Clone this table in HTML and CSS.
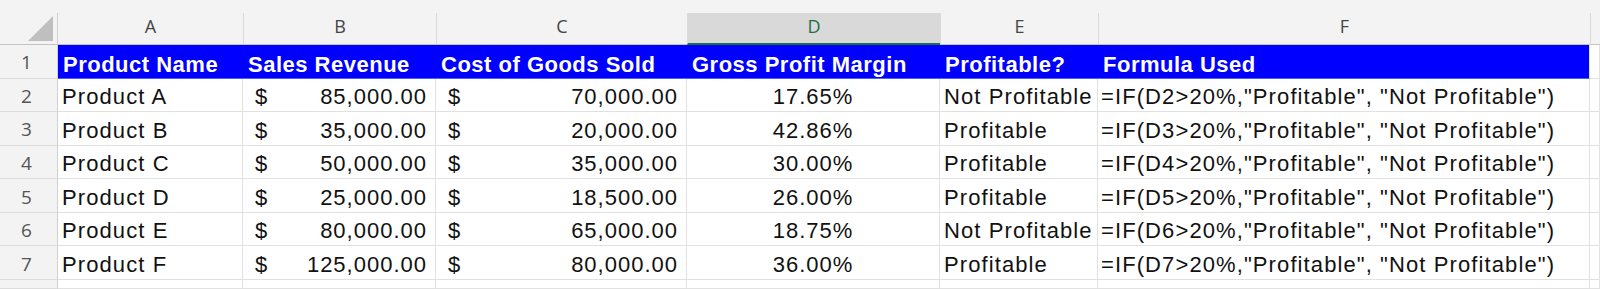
FILE: index.html
```html
<!DOCTYPE html>
<html>
<head>
<meta charset="utf-8">
<link rel="stylesheet" href="styles.css">
</head>
<body>
<div class="sheet">
  <div class="topband"></div>

  <div class="corner"><svg class="tri" width="57" height="31" viewBox="0 0 57 31"><polygon points="53,3 53,28 28,28" fill="#bfbfbf"/></svg></div>
  <div class="colhead first">A</div>
  <div class="colhead">B</div>
  <div class="colhead">C</div>
  <div class="colhead sel">D</div>
  <div class="colhead">E</div>
  <div class="colhead">F</div>
  <div class="colhead"></div>

  <div class="rowhead">1</div>
  <div class="cell hdr">Product Name</div>
  <div class="cell hdr">Sales Revenue</div>
  <div class="cell hdr">Cost of Goods Sold</div>
  <div class="cell hdr">Gross Profit Margin</div>
  <div class="cell hdr">Profitable?</div>
  <div class="cell hdr end">Formula Used</div>
  <div class="cell"></div>

  <div class="rowhead">2</div>
  <div class="cell">Product A</div>
  <div class="cell acc"><span>$</span><span>85,000.00</span></div>
  <div class="cell acc"><span>$</span><span>70,000.00</span></div>
  <div class="cell ctr">17.65%</div>
  <div class="cell">Not Profitable</div>
  <div class="cell fx">=IF(D2&gt;20%,"Profitable", "Not Profitable")</div>
  <div class="cell"></div>

  <div class="rowhead">3</div>
  <div class="cell">Product B</div>
  <div class="cell acc"><span>$</span><span>35,000.00</span></div>
  <div class="cell acc"><span>$</span><span>20,000.00</span></div>
  <div class="cell ctr">42.86%</div>
  <div class="cell">Profitable</div>
  <div class="cell fx">=IF(D3&gt;20%,"Profitable", "Not Profitable")</div>
  <div class="cell"></div>

  <div class="rowhead">4</div>
  <div class="cell">Product C</div>
  <div class="cell acc"><span>$</span><span>50,000.00</span></div>
  <div class="cell acc"><span>$</span><span>35,000.00</span></div>
  <div class="cell ctr">30.00%</div>
  <div class="cell">Profitable</div>
  <div class="cell fx">=IF(D4&gt;20%,"Profitable", "Not Profitable")</div>
  <div class="cell"></div>

  <div class="rowhead">5</div>
  <div class="cell">Product D</div>
  <div class="cell acc"><span>$</span><span>25,000.00</span></div>
  <div class="cell acc"><span>$</span><span>18,500.00</span></div>
  <div class="cell ctr">26.00%</div>
  <div class="cell">Profitable</div>
  <div class="cell fx">=IF(D5&gt;20%,"Profitable", "Not Profitable")</div>
  <div class="cell"></div>

  <div class="rowhead">6</div>
  <div class="cell">Product E</div>
  <div class="cell acc"><span>$</span><span>80,000.00</span></div>
  <div class="cell acc"><span>$</span><span>65,000.00</span></div>
  <div class="cell ctr">18.75%</div>
  <div class="cell">Not Profitable</div>
  <div class="cell fx">=IF(D6&gt;20%,"Profitable", "Not Profitable")</div>
  <div class="cell"></div>

  <div class="rowhead">7</div>
  <div class="cell">Product F</div>
  <div class="cell acc"><span>$</span><span>125,000.00</span></div>
  <div class="cell acc"><span>$</span><span>80,000.00</span></div>
  <div class="cell ctr">36.00%</div>
  <div class="cell">Profitable</div>
  <div class="cell fx">=IF(D7&gt;20%,"Profitable", "Not Profitable")</div>
  <div class="cell"></div>

  <div class="rowhead"></div>
  <div class="cell"></div>
  <div class="cell"></div>
  <div class="cell"></div>
  <div class="cell"></div>
  <div class="cell"></div>
  <div class="cell"></div>
  <div class="cell"></div>
</div>
</body>
</html>
```

FILE: styles.css
```css
html, body {
  margin: 0;
  padding: 0;
  background: #ffffff;
}

.sheet {
  display: grid;
  grid-template-columns: 58px 185px 193px 251px 253px 158px 492px 1fr;
  grid-template-rows: 13px 32px repeat(7, 33.57px) 1fr;
  height: 289px;
  width: 1600px;
  overflow: hidden;
  font-family: "Liberation Sans", Arial, sans-serif;
  font-size: 22px;
  color: #111111;
}

.topband {
  grid-column: 1 / -1;
  background: #f3f3f3;
}

.corner {
  background: #f3f3f3;
  border-right: 1px solid #d0d0d0;
  border-bottom: 1px solid #c4c4c4;
  box-sizing: border-box;
}

.tri {
  display: block;
}

.colhead {
  background: #f3f3f3;
  border-left: 1px solid #d9d9d9;
  border-bottom: 1px solid #c4c4c4;
  box-sizing: border-box;
  display: flex;
  align-items: center;
  justify-content: center;
  font-family: "Open Sans", "Noto Sans", sans-serif;
  font-size: 18px;
  color: #454545;
  padding-bottom: 5px;
}

.colhead.first {
  border-left: none;
}

.colhead.sel {
  background: #d9d9d9;
  color: #1d7044;
  border-bottom: 2px solid #1d7044;
  padding-bottom: 4px;
}

.rowhead {
  background: #f3f3f3;
  border-right: 1px solid #d0d0d0;
  border-bottom: 1px solid #dcdcdc;
  box-sizing: border-box;
  display: flex;
  align-items: center;
  justify-content: center;
  font-family: "Open Sans", "Noto Sans", sans-serif;
  font-size: 19px;
  color: #555555;
  padding-right: 4px;
  padding-top: 2px;
}

.cell {
  border-right: 1px solid #e1e1e1;
  border-bottom: 1px solid #e1e1e1;
  box-sizing: border-box;
  display: flex;
  align-items: flex-end;
  padding: 0 4px 2px 4px;
  white-space: nowrap;
  overflow: visible;
  line-height: 25px;
  letter-spacing: 1.1px;
}

.cell.hdr {
  background: #0000ff;
  color: #ffffff;
  font-weight: bold;
  letter-spacing: 0.5px;
  border-right: none;
  border-bottom: 1px solid #4d5dff;
  padding-left: 5px;
  padding-bottom: 1px;
}

.cell.hdr.end {
  border-right: 1px solid #e1e1e1;
}

.cell.acc {
  justify-content: space-between;
  padding-left: 12px;
  padding-right: 8px;
  letter-spacing: 1px;
}

.cell.ctr {
  justify-content: center;
  letter-spacing: 1px;
}

.cell.fx {
  padding-left: 3px;
}
```
